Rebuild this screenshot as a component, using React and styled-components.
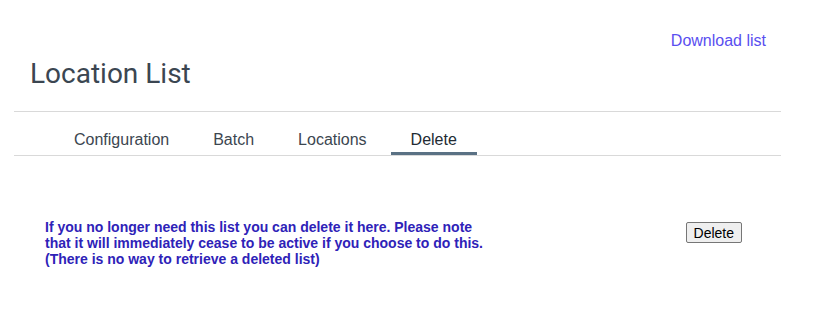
import React from "react";
import styled, { createGlobalStyle } from "styled-components";

const Global = createGlobalStyle`
  html, body { margin: 0; padding: 0; background: #fff; }
  body { font-family: "Liberation Sans", Arial, sans-serif; }
`;

const Page = styled.div`
  width: 767px;
  margin-left: 14px;
  padding-top: 32px;
`;

const TopBar = styled.div`
  display: flex;
  justify-content: flex-end;
  padding-right: 15px;
`;

const DownloadLink = styled.a`
  font-size: 16px;
  line-height: 18px;
  color: #5a4ff0;
  text-decoration: none;
  cursor: pointer;
`;

const Title = styled.h1`
  margin: 9px 0 0 16px;
  font-family: Roboto, "Liberation Sans", Arial, sans-serif;
  font-size: 28px;
  font-weight: 400;
  line-height: 30px;
  color: #3b4651;
  height: 52px;
`;

const Rule = styled.div`
  height: 1px;
  background: #d9d9d9;
`;

const Tabs = styled.nav`
  display: flex;
  gap: 4px;
  padding-left: 40px;
  margin-top: 18px;
`;

const Tab = styled.div`
  padding: 0 20px 2px;
  font-size: 16px;
  line-height: 20px;
  color: ${(p) => (p.$active ? "#222b33" : "#3c4650")};
  border-bottom: 3px solid ${(p) => (p.$active ? "#5a7184" : "transparent")};
`;

const Content = styled.section`
  display: flex;
  justify-content: space-between;
  align-items: flex-start;
  padding: 63px 39px 0 31px;
`;

const Notice = styled.p`
  margin: 0;
  width: 445px;
  font-size: 14px;
  font-weight: 700;
  line-height: 16px;
  color: #2e22b8;
`;

const DeleteButton = styled.button`
  margin-top: 3px;
  height: 21px;
  font-family: "Liberation Sans", Arial, sans-serif;
  font-size: 14px;
  padding: 0 7px;
  background: #efefef;
  border: 1px solid #767676;
  border-radius: 2px;
  color: #000;
`;

export default function App() {
  return (
    <>
      <Global />
      <Page>
        <TopBar>
          <DownloadLink>Download list</DownloadLink>
        </TopBar>
        <Title>Location List</Title>
        <Rule />
        <Tabs>
          <Tab>Configuration</Tab>
          <Tab>Batch</Tab>
          <Tab>Locations</Tab>
          <Tab $active>Delete</Tab>
        </Tabs>
        <Rule />
        <Content>
          <Notice>
            If you no longer need this list you can delete it here. Please note
            that it will immediately cease to be active if you choose to do this.
            (There is no way to retrieve a deleted list)
          </Notice>
          <DeleteButton>Delete</DeleteButton>
        </Content>
      </Page>
    </>
  );
}
